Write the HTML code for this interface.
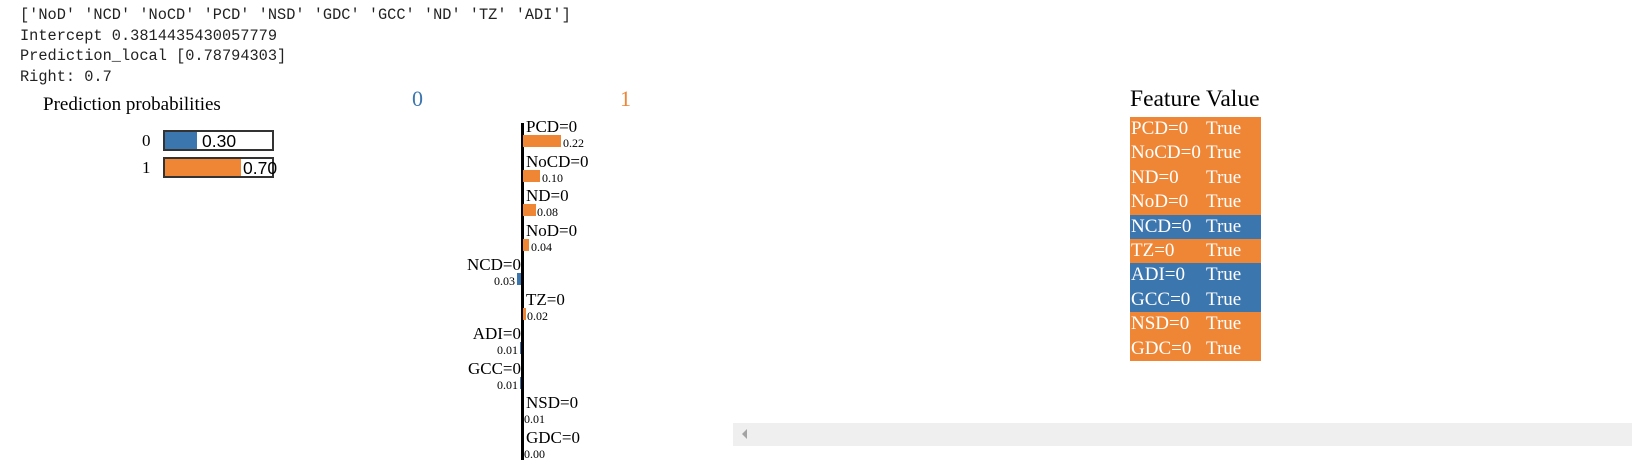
<!DOCTYPE html>
<html><head><meta charset="utf-8"><style>
body{margin:0;width:1632px;height:467px;background:#fff;position:relative;overflow:hidden;font-family:"Liberation Serif",serif}
.a{position:absolute;white-space:nowrap}
.mono{font-family:"Liberation Mono",monospace;font-size:15.3px;line-height:20.7px;color:#222;left:20px;top:5px}
.lbl{font-size:17px;line-height:17px}
.val{font-size:12px;line-height:12px}
.or{background:#ef8636}.bl{background:#3c76af}
.row{position:absolute;left:1130px;width:131px;height:24.4px;color:#fff;font-size:19px;line-height:24px}
.row span{position:absolute;left:1px}
.row b{font-weight:normal;position:absolute;left:76px}
</style></head><body>
<div class="a mono">['NoD' 'NCD' 'NoCD' 'PCD' 'NSD' 'GDC' 'GCC' 'ND' 'TZ' 'ADI']<br>Intercept 0.3814435430057779<br>Prediction_local <span style="color:#222">[0.78794303]</span><br>Right: 0.7</div>

<div class="a" style="left:43px;top:94px;font-size:19px">Prediction probabilities</div>
<div class="a" style="left:142px;top:131px;font-size:17px">0</div>
<div class="a" style="left:142px;top:158px;font-size:17px">1</div>
<div class="a" style="left:163px;top:130px;width:107px;height:17px;border:2px solid #333"></div>
<div class="a bl" style="left:165px;top:132px;width:32px;height:17px"></div>
<div class="a" style="left:202px;top:131px;font:17.5px 'Liberation Sans',sans-serif">0.30</div>
<div class="a" style="left:163px;top:157px;width:107px;height:17px;border:2px solid #333"></div>
<div class="a or" style="left:165px;top:159px;width:76px;height:17px"></div>
<div class="a" style="left:243px;top:158px;font:17.5px 'Liberation Sans',sans-serif">0.70</div>

<div class="a" style="left:412px;top:86px;font-size:22px;color:#3c76af">0</div>
<div class="a" style="left:620px;top:86px;font-size:22px;color:#ef8636">1</div>
<div class="a" style="left:521px;top:123px;width:2.5px;height:337px;background:#000"></div>

<div class="a lbl" style="left:526px;top:118px">PCD=0</div>
<div class="a or" style="left:523px;top:135px;width:38px;height:12px"></div>
<div class="a val" style="left:563px;top:137px">0.22</div>

<div class="a lbl" style="left:526px;top:153px">NoCD=0</div>
<div class="a or" style="left:523px;top:170px;width:17px;height:12px"></div>
<div class="a val" style="left:542px;top:172px">0.10</div>

<div class="a lbl" style="left:526px;top:187px">ND=0</div>
<div class="a or" style="left:523px;top:204px;width:12.5px;height:12px"></div>
<div class="a val" style="left:537px;top:206px">0.08</div>

<div class="a lbl" style="left:526px;top:222px">NoD=0</div>
<div class="a or" style="left:523px;top:239px;width:6px;height:12px"></div>
<div class="a val" style="left:531px;top:241px">0.04</div>

<div class="a lbl" style="right:1111px;top:256px">NCD=0</div>
<div class="a bl" style="left:517px;top:273px;width:4px;height:12px"></div>
<div class="a val" style="right:1117px;top:275px">0.03</div>

<div class="a lbl" style="left:526px;top:291px">TZ=0</div>
<div class="a or" style="left:523px;top:308px;width:3px;height:12px"></div>
<div class="a val" style="left:527px;top:310px">0.02</div>

<div class="a lbl" style="right:1111px;top:325px">ADI=0</div>
<div class="a bl" style="left:519.5px;top:342px;width:1.5px;height:12px"></div>
<div class="a val" style="right:1114px;top:344px">0.01</div>

<div class="a lbl" style="right:1111px;top:360px">GCC=0</div>
<div class="a bl" style="left:519.5px;top:377px;width:1.5px;height:12px"></div>
<div class="a val" style="right:1114px;top:379px">0.01</div>

<div class="a lbl" style="left:526px;top:394px">NSD=0</div>
<div class="a val" style="left:524px;top:413px">0.01</div>

<div class="a lbl" style="left:526px;top:429px">GDC=0</div>
<div class="a val" style="left:524px;top:448px">0.00</div>

<div class="a" style="left:1130px;top:86px;font-size:23.5px">Feature</div>
<div class="a" style="left:1206px;top:86px;font-size:23.5px">Value</div>
<div class="row or" style="top:117px"><span>PCD=0</span><b>True</b></div>
<div class="row or" style="top:141.4px"><span>NoCD=0</span><b>True</b></div>
<div class="row or" style="top:165.8px"><span>ND=0</span><b>True</b></div>
<div class="row or" style="top:190.2px"><span>NoD=0</span><b>True</b></div>
<div class="row bl" style="top:214.6px"><span>NCD=0</span><b>True</b></div>
<div class="row or" style="top:239px"><span>TZ=0</span><b>True</b></div>
<div class="row bl" style="top:263.4px"><span>ADI=0</span><b>True</b></div>
<div class="row bl" style="top:287.8px"><span>GCC=0</span><b>True</b></div>
<div class="row or" style="top:312.2px"><span>NSD=0</span><b>True</b></div>
<div class="row or" style="top:336.6px"><span>GDC=0</span><b>True</b></div>

<div class="a" style="left:733px;top:423px;width:899px;height:23px;background:#efefef"></div>
<div class="a" style="left:742px;top:429px;width:0;height:0;border-top:5px solid transparent;border-bottom:5px solid transparent;border-right:5px solid #a3a3a3"></div>
</body></html>
